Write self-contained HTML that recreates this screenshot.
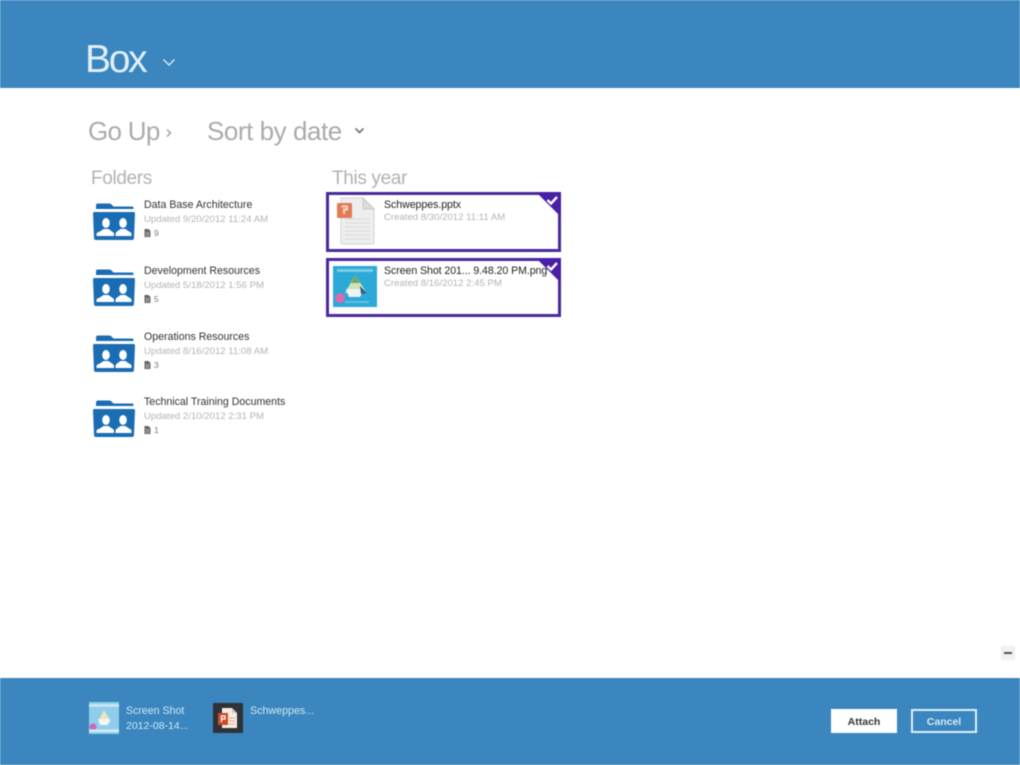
<!DOCTYPE html>
<html>
<head>
<meta charset="utf-8">
<style>
html,body{margin:0;padding:0;background:#fff}
#p{position:relative;width:1020px;height:765px;overflow:hidden;background:#fff;font-family:"Liberation Sans",sans-serif;filter:blur(.6px)}
#p div,#p svg{position:absolute}
.t{white-space:nowrap;line-height:1}
.h{color:#ababab;font-size:26px}
.g{color:#b2b2b2;font-size:19px;letter-spacing:-.35px}
.n{color:#333;font-size:10.6px}
.d{color:#b4b4b4;font-size:9.6px}
.c{color:#777;font-size:8.5px}
.box{box-sizing:border-box;border:3px solid #4a2a9a;width:235px;background:#fff}
</style>
</head>
<body>
<div id="p">
<svg width="0" height="0" style="position:absolute">
<defs>
<symbol id="folder" viewBox="0 0 42 37">
<path d="M3 6V2.500Q3 .5 5 .5H16Q18 .5 19 2L20.500 3.500H39Q40.500 3.500 40.500 5V6Z" fill="#1b6db3"/>
<path d="M1.500 9H40.500Q42 9 42 10.500L41 35Q41 37 39 37H3Q1 37 1 35L0 10.500Q0 9 1.500 9Z" fill="#1b6db3"/>
<ellipse cx="13" cy="20" rx="3.800" ry="5" fill="#fff"/>
<path d="M3.500 33V31Q3.500 29.500 7 28.500L10.500 26H15.500L19 28.500Q21 29.500 21 31V33Z" fill="#fff"/>
<ellipse cx="30" cy="20" rx="3.800" ry="5" fill="#fff"/>
<path d="M22.500 33V31Q22.500 29.500 24 28.500L27.500 26H32.500L36 28.500Q38.500 29.500 38.500 31V33Z" fill="#fff"/>
</symbol>
<symbol id="doc" viewBox="0 0 7 8">
<path d="M.5 0H4.500L6.500 2V8H.5Z" fill="#666"/>
<path d="M1.500 3.500H5.500M1.500 5H5.500M1.500 6.500H5.500" stroke="#ddd" stroke-width=".6"/>
</symbol>
</defs>
</svg>

<div style="left:0;top:0;width:1020px;height:88px;background:#3b86bf"></div>
<div class="t" style="left:85px;top:40px;font-size:39px;color:#dff0f8;letter-spacing:-2.3px">Box</div>
<svg style="left:162px;top:58px" width="14" height="9" viewBox="0 0 14 9"><path d="M1.500 1.500L7 7L12.500 1.500" fill="none" stroke="#d5ecf6" stroke-width="1.400"/></svg>

<div class="t h" style="left:88px;top:118px;letter-spacing:-.7px">Go Up</div>
<svg style="left:165px;top:127px" width="8" height="12" viewBox="0 0 8 12"><path d="M2 2.500L5.500 6L2 9.500" fill="none" stroke="#999" stroke-width="1.300"/></svg>
<div class="t h" style="left:207px;top:118px;letter-spacing:-.45px">Sort by date</div>
<svg style="left:354px;top:127px" width="11" height="8" viewBox="0 0 11 8"><path d="M1.500 1.500L5.500 5.500L9.500 1.500" fill="none" stroke="#777" stroke-width="1.800"/></svg>

<div class="t g" style="left:91px;top:169px">Folders</div>
<div class="t g" style="left:332px;top:169px">This year</div>

<!-- folders -->
<svg style="left:93px;top:203px" width="42" height="37"><use href="#folder"/></svg>
<div class="t n" style="left:144px;top:200px">Data Base Architecture</div>
<div class="t d" style="left:144px;top:215px">Updated 9/20/2012 11:24 AM</div>
<svg style="left:144px;top:229px" width="7" height="8"><use href="#doc"/></svg>
<div class="t c" style="left:154px;top:229px">9</div>

<svg style="left:93px;top:269px" width="42" height="37"><use href="#folder"/></svg>
<div class="t n" style="left:144px;top:266px">Development Resources</div>
<div class="t d" style="left:144px;top:281px">Updated 5/18/2012 1:56 PM</div>
<svg style="left:144px;top:295px" width="7" height="8"><use href="#doc"/></svg>
<div class="t c" style="left:154px;top:295px">5</div>

<svg style="left:93px;top:335px" width="42" height="37"><use href="#folder"/></svg>
<div class="t n" style="left:144px;top:332px">Operations Resources</div>
<div class="t d" style="left:144px;top:347px">Updated 8/16/2012 11:08 AM</div>
<svg style="left:144px;top:361px" width="7" height="8"><use href="#doc"/></svg>
<div class="t c" style="left:154px;top:361px">3</div>

<svg style="left:93px;top:400px" width="42" height="37"><use href="#folder"/></svg>
<div class="t n" style="left:144px;top:397px">Technical Training Documents</div>
<div class="t d" style="left:144px;top:412px">Updated 2/10/2012 2:31 PM</div>
<svg style="left:144px;top:426px" width="7" height="8"><use href="#doc"/></svg>
<div class="t c" style="left:154px;top:426px">1</div>

<!-- file 1 -->
<div class="box" style="left:326px;top:192px;height:60px"></div>
<svg style="left:336px;top:197px" width="40" height="48" viewBox="0 0 40 48">
<path d="M5 1H27L38 12V45Q38 47 36 47H7Q5 47 5 45Z" fill="#eeeeee" stroke="#d4d4d4"/>
<path d="M27 1V12H38Z" fill="#dcdcdc" stroke="#c8c8c8"/>
<path d="M9 22H34M9 26H34M9 30H34M9 34H34M9 38H34M9 42H34" stroke="#d8d8d8"/>
<rect x="1" y="6" width="15" height="15" rx="1" fill="#e27a56"/>
<path d="M5.500 9.500H11V12.500H8V17" fill="none" stroke="#f8d6c6" stroke-width="2"/>
</svg>
<div class="t n" style="left:384px;top:200px;color:#222;letter-spacing:-.05px">Schweppes.pptx</div>
<div class="t d" style="left:384px;top:213px">Created 8/30/2012 11:11 AM</div>
<svg style="left:535px;top:192px" width="26" height="26" viewBox="0 0 26 26">
<path d="M1 0H26V25Z" fill="#4a1fa8"/>
<path d="M12.500 8L16 11.500L22 5" fill="none" stroke="#fff" stroke-width="2.400"/>
</svg>

<!-- file 2 -->
<div class="box" style="left:326px;top:258px;height:59px"></div>
<svg style="left:333px;top:266px" width="44" height="41" viewBox="0 0 44 41">
<rect width="44" height="41" fill="#2ba9d8"/>
<rect x="4" y="3" width="36" height="3" fill="#7ccbe6"/>
<path d="M22 9L34 27H12Z" fill="#cfe3b4"/>
<path d="M22 9L27 17H18Z" fill="#6da866"/>
<path d="M13 23H31L27 31H16Z" fill="#eef4f5"/>
<path d="M27 20L34 27L28 28Z" fill="#2f5f8f"/>
<circle cx="7" cy="32" r="5" fill="#d86ab0"/>
<rect x="12" y="35" width="24" height="2" fill="#62bfe0"/>
</svg>
<div class="t n" style="left:384px;top:266px;color:#222;letter-spacing:-.07px">Screen Shot 201... 9.48.20 PM.png</div>
<div class="t d" style="left:384px;top:279px">Created 8/16/2012 2:45 PM</div>
<svg style="left:535px;top:258px" width="26" height="26" viewBox="0 0 26 26">
<path d="M1 0H26V25Z" fill="#4a1fa8"/>
<path d="M12.500 8L16 11.500L22 5" fill="none" stroke="#fff" stroke-width="2.400"/>
</svg>

<!-- zoom button -->
<div style="left:1001px;top:646px;width:14px;height:14px;background:#f1f1f1"></div>
<div style="left:1004px;top:652px;width:8px;height:2px;background:#555"></div>

<!-- bottom bar -->
<div style="left:0;top:678px;width:1020px;height:87px;background:#3b86bf"></div>
<svg style="left:89px;top:702px" width="30" height="32" viewBox="0 0 30 32">
<rect width="30" height="32" fill="#8fcdea"/>
<rect y="2" width="30" height="3" fill="#c4e4f3"/>
<path d="M15 8L22 20H9Z" fill="#e8e6c4"/>
<path d="M9 17H21L19 23H11Z" fill="#f4f6f4"/>
<circle cx="4" cy="25" r="3.500" fill="#c86ab8"/>
<rect y="27.500" width="30" height="2.500" fill="#d6ecf6"/>
</svg>
<div class="t" style="left:126px;top:706px;font-size:10.6px;color:#cde7f4">Screen Shot</div>
<div class="t" style="left:126px;top:721px;font-size:10.5px;color:#cde7f4">2012-08-14...</div>

<svg style="left:213px;top:703px" width="30" height="30" viewBox="0 0 30 30">
<rect width="30" height="30" fill="#2f3237"/>
<path d="M9 5H19L24 10V25H9Z" fill="#f6ece6"/>
<path d="M19 5V10H24Z" fill="#d9c4b8"/>
<rect x="5" y="10" width="10" height="12" fill="#cf4b24"/>
<path d="M8.500 19V13H12V16H8.500" fill="none" stroke="#fff" stroke-width="1.300"/>
<path d="M16 15H22M16 18H22M16 21H22" stroke="#e8a78c"/>
</svg>
<div class="t" style="left:250px;top:706px;font-size:10.7px;color:#cde7f4">Schweppes...</div>

<div style="left:831px;top:709px;width:66px;height:24px;background:#fff"></div>
<div class="t" style="left:831px;top:717px;width:66px;text-align:center;font-size:10.5px;font-weight:bold;color:#333">Attach</div>
<div style="left:911px;top:709px;width:66px;height:24px;box-sizing:border-box;border:2px solid #ddf0f9"></div>
<div class="t" style="left:911px;top:717px;width:66px;text-align:center;font-size:10.5px;font-weight:bold;color:#d3ebf6">Cancel</div>
</div>
</body>
</html>
